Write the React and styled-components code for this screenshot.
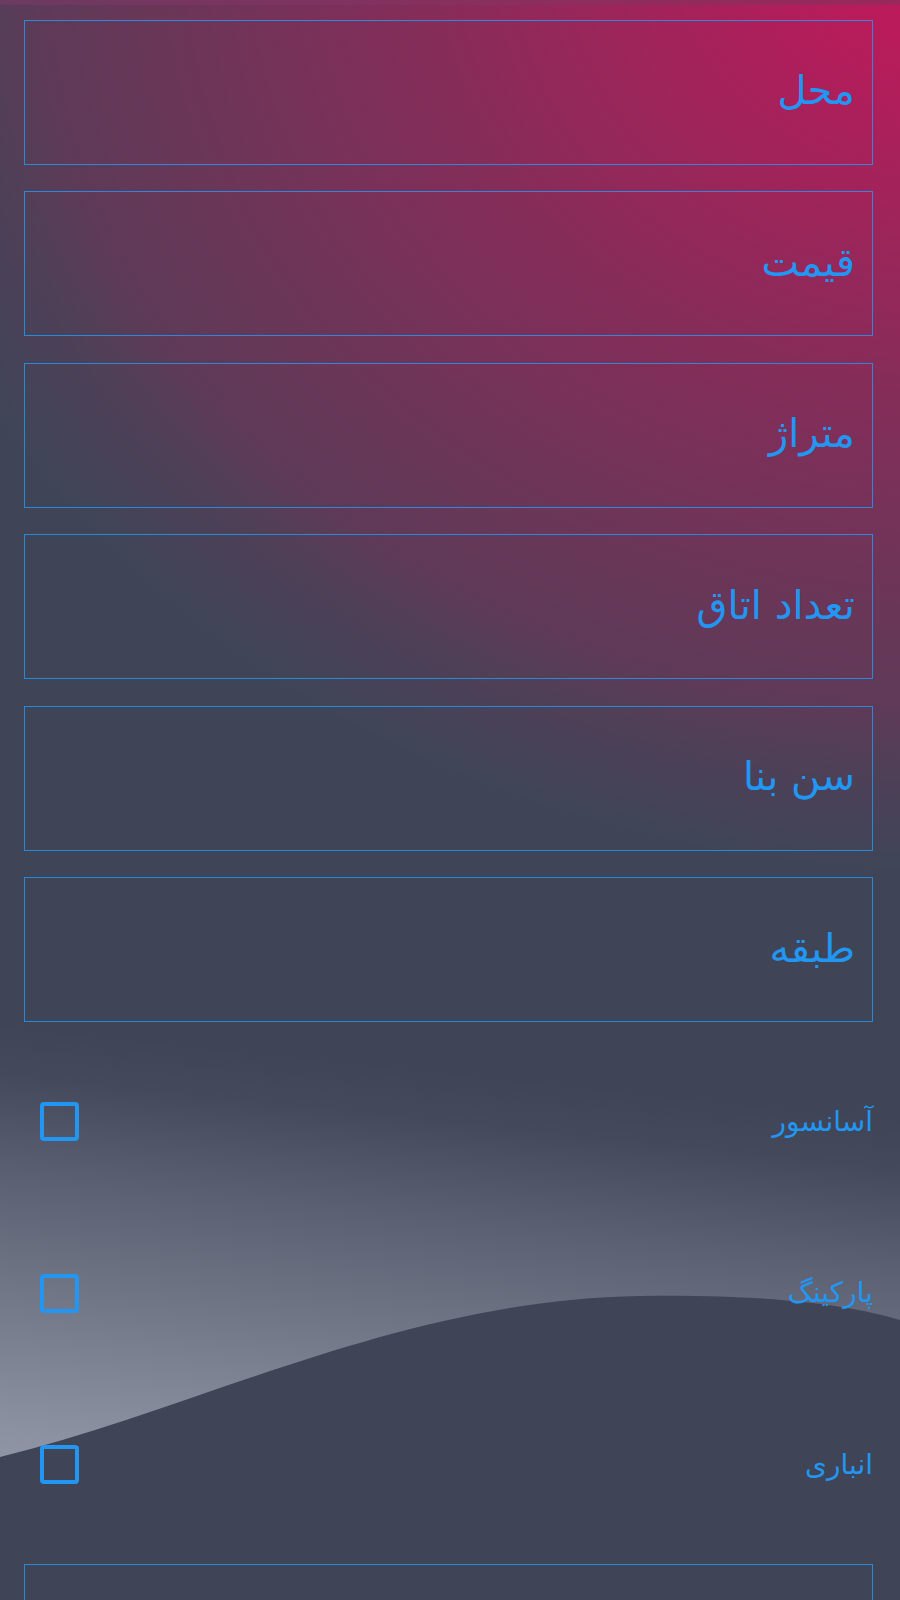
import React from "react";
import styled, { createGlobalStyle } from "styled-components";

const Global = createGlobalStyle`
  html, body { margin: 0; padding: 0; background: #3f4557; }
  * { box-sizing: border-box; }
`;

const Page = styled.div`
  position: relative;
  width: 900px;
  min-height: 1600px;
  overflow: hidden;
  direction: rtl;
  font-family: "DejaVu Sans", "Noto Sans", sans-serif;
  background-color: #3f4557;
  background-image:
    radial-gradient(
      ellipse 1140px 950px at 950px -50px,
      rgba(194, 24, 91, 1) 0%,
      rgba(194, 24, 91, 0.93) 10%,
      rgba(194, 24, 91, 0.53) 47%,
      rgba(194, 24, 91, 0.34) 68%,
      rgba(194, 24, 91, 0.24) 80%,
      rgba(194, 24, 91, 0.11) 87%,
      rgba(194, 24, 91, 0) 97%
    ),
    linear-gradient(
      6deg,
      rgba(160, 164, 180, 1) 0%,
      rgba(160, 164, 180, 0.8) 10%,
      rgba(160, 164, 180, 0.6) 16%,
      rgba(160, 164, 180, 0.29) 25%,
      rgba(160, 164, 180, 0.05) 31%,
      rgba(160, 164, 180, 0) 34%
    );
  background-size: 900px 1600px, 900px 1600px;
  background-repeat: no-repeat;
`;

const Wave = styled.svg`
  position: absolute;
  top: 0;
  left: 0;
  width: 900px;
  height: 1600px;
  z-index: 0;
  pointer-events: none;
`;

const TopEdge = styled.div`
  position: relative;
  z-index: 1;
  height: 5px;
  background: linear-gradient(90deg, #6e3a63 0%, #8a2f5f 60%, #932b5b 100%);
  opacity: 0.85;
`;

const Form = styled.form`
  position: relative;
  z-index: 1;
  display: flex;
  flex-direction: column;
  gap: 26.6px;
  padding: 14.5px 27px 40px 24px;
`;

const Field = styled.label`
  display: flex;
  align-items: center;
  height: 145px;
  border: 1px solid rgba(33, 150, 243, 0.85);
  padding: 0 17px 4px 17px;
`;

const FieldLabel = styled.span`
  color: #2196f3;
  font-size: 40px;
  line-height: 1;
`;

const CheckRow = styled.label`
  display: flex;
  align-items: center;
  justify-content: space-between;
  height: 145px;
  padding: 0 0 0 16px;
`;

const CheckLabel = styled.span`
  color: #2196f3;
  font-size: 28px;
  line-height: 1;
`;

const Box = styled.span`
  display: block;
  width: 39px;
  height: 39px;
  border: 4px solid #2196f3;
  border-radius: 4px;
  background: ${(p) => (p.$checked ? "#2196f3" : "transparent")};
`;

const fields = ["محل", "قیمت", "متراژ", "تعداد اتاق", "سن بنا", "طبقه"];
const checks = ["آسانسور", "پارکینگ", "انباری"];

export default function App() {
  return (
    <>
      <Global />
      <Page>
        <Wave viewBox="0 0 900 1600" preserveAspectRatio="none" aria-hidden="true">
          <path
            d="M0,1457 C200,1408 400,1300 640,1296 C770,1294 850,1305 900,1320 L900,1600 L0,1600 Z"
            fill="#3f4557"
          />
        </Wave>
        <TopEdge />
        <Form>
          {fields.map((f) => (
            <Field key={f}>
              <FieldLabel>{f}</FieldLabel>
            </Field>
          ))}
          {checks.map((c) => (
            <CheckRow key={c}>
              <CheckLabel>{c}</CheckLabel>
              <Box />
            </CheckRow>
          ))}
          <Field>
            <FieldLabel>آگهی</FieldLabel>
          </Field>
        </Form>
      </Page>
    </>
  );
}
